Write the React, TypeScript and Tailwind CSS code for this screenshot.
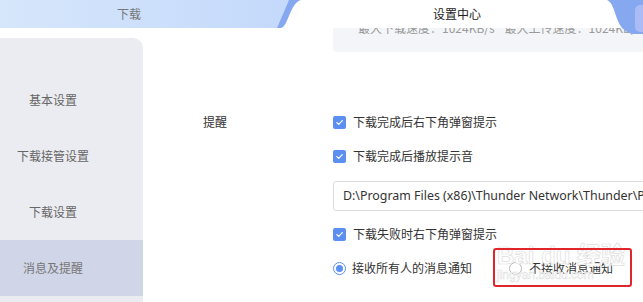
import React from "react";

function Check() {
  return (
    <span className="flex h-[13px] w-[13px] shrink-0 items-center justify-center rounded-[2px] bg-[#5b8ff2]">
      <svg width="9" height="9" viewBox="0 0 9 9" fill="none">
        <path d="M1.8 4.6 L3.7 6.4 L7.3 2.6" stroke="white" strokeWidth="1.3" strokeLinecap="round" strokeLinejoin="round" />
      </svg>
    </span>
  );
}

function CheckRow({ label }: { label: string }) {
  return (
    <div className="flex h-[34px] items-center pl-[130px]">
      <Check />
      <span className="ml-[7px] whitespace-nowrap text-[#333]">{label}</span>
    </div>
  );
}

export default function App() {
  return (
    <div className="relative h-[302px] w-[643px] overflow-hidden bg-white font-['Noto_Sans_CJK_SC','Noto_Sans',sans-serif] text-[12px] leading-[16px]">
      {/* tab bar */}
      <div className="relative z-10 flex h-[28px]">
        <svg className="absolute left-0 top-0" width="643" height="36" viewBox="0 0 643 36">
          <defs>
            <linearGradient id="lt" x1="0" x2="1" y1="0" y2="0">
              <stop offset="0" stopColor="#d6e6fb" />
              <stop offset="1" stopColor="#c4d9fb" />
            </linearGradient>
          </defs>
          <rect x="0" y="0" width="643" height="28" fill="#86a8f0" />
          <path d="M0 0 H289 L277 28 H0 Z" fill="url(#lt)" />
          <path d="M281 28 C288 27 290 3 301 0 H607 C615 3 616 24 623 28 Z" fill="white" />
          <path d="M621 27 C626 31 628 34 634 34 H643 V27 Z" fill="#86a8f0" />
          <rect x="635" y="5" width="14" height="27" rx="5" fill="#a9bcf6" />
        </svg>
        <div className="relative flex w-[258px] shrink-0 items-center justify-center text-[#777]">下载</div>
        <div className="relative ml-[27px] flex w-[344px] shrink-0 items-center justify-center text-[#222]">设置中心</div>
      </div>

      {/* body */}
      <div className="flex h-[274px]">
        <div className="mt-[10px] flex w-[143px] shrink-0 flex-col rounded-tr-[10px] bg-[#ebecf1] pt-[34px] text-[#666]">
          {["基本设置", "下载接管设置", "下载设置"].map((t) => (
            <div key={t} className="flex h-[56px] items-center">
              <span className="w-[106px] text-center">{t}</span>
            </div>
          ))}
          <div className="flex h-[56px] items-center bg-[#d0d6e7] text-[#777]">
            <span className="w-[106px] text-center">消息及提醒</span>
          </div>
        </div>

        <div className="flex min-w-0 flex-1 flex-col pl-[60px]">
          <div className="ml-[130px] h-[24px] shrink-0 overflow-hidden rounded-bl-[4px] bg-[#f4f5f8]">
            <div className="-mt-[8px] flex whitespace-nowrap pl-[25px] text-[#9a9a9a]">
              <span>最大下载速度：1024KB/s</span>
              <span className="ml-[10px]">最大上传速度：1024KB/s</span>
            </div>
          </div>

          <div className="mt-[53px] flex h-[34px] items-center">
            <span className="w-[130px] shrink-0 text-[#333]">提醒</span>
            <Check />
            <span className="ml-[7px] whitespace-nowrap text-[#333]">下载完成后右下角弹窗提示</span>
          </div>
          <CheckRow label="下载完成后播放提示音" />

          <div className="ml-[130px] mt-[8px] flex h-[30px] w-[360px] shrink-0 items-center overflow-hidden whitespace-nowrap rounded-[3px] border border-[#dcdcdc] pl-[9px] font-['Noto_Sans',sans-serif] text-[12.4px] text-[#333]">
            D:\Program Files (x86)\Thunder Network\Thunder\Program
          </div>

          <div className="mt-[6px]">
            <CheckRow label="下载失败时右下角弹窗提示" />
          </div>

          <div className="flex h-[34px] items-center pl-[130px]">
            <span className="flex h-[13px] w-[13px] shrink-0 items-center justify-center rounded-full border border-[#5b8ff2]">
              <span className="h-[7px] w-[7px] rounded-full bg-[#5b8ff2]" />
            </span>
            <span className="ml-[6px] whitespace-nowrap text-[#333]">接收所有人的消息通知</span>
            <span className="ml-[37px] h-[13px] w-[13px] shrink-0 rounded-full border border-[#b8b8b8]" />
            <span className="ml-[7px] whitespace-nowrap text-[#333]">不接收消息通知</span>
          </div>
        </div>
      </div>

      {/* watermark */}
      <div className="pointer-events-none absolute left-[497px] top-[243px] flex flex-col items-start font-['Liberation_Sans','Noto_Sans_CJK_SC',sans-serif] text-white">
        <span className="text-[24px] font-bold leading-[26px] [-webkit-text-stroke:0.7px_#dedede]">Bai du 经验</span>
        <span className="text-[12px] leading-[13px] [-webkit-text-stroke:0.5px_#e0e0e0]">jingyan.baidu.com</span>
      </div>

      {/* red annotation box */}
      <div className="pointer-events-none absolute left-[493px] top-[248px] h-[39px] w-[139px] rounded-[3px] border-2 border-[#e0262a]" />
    </div>
  );
}
